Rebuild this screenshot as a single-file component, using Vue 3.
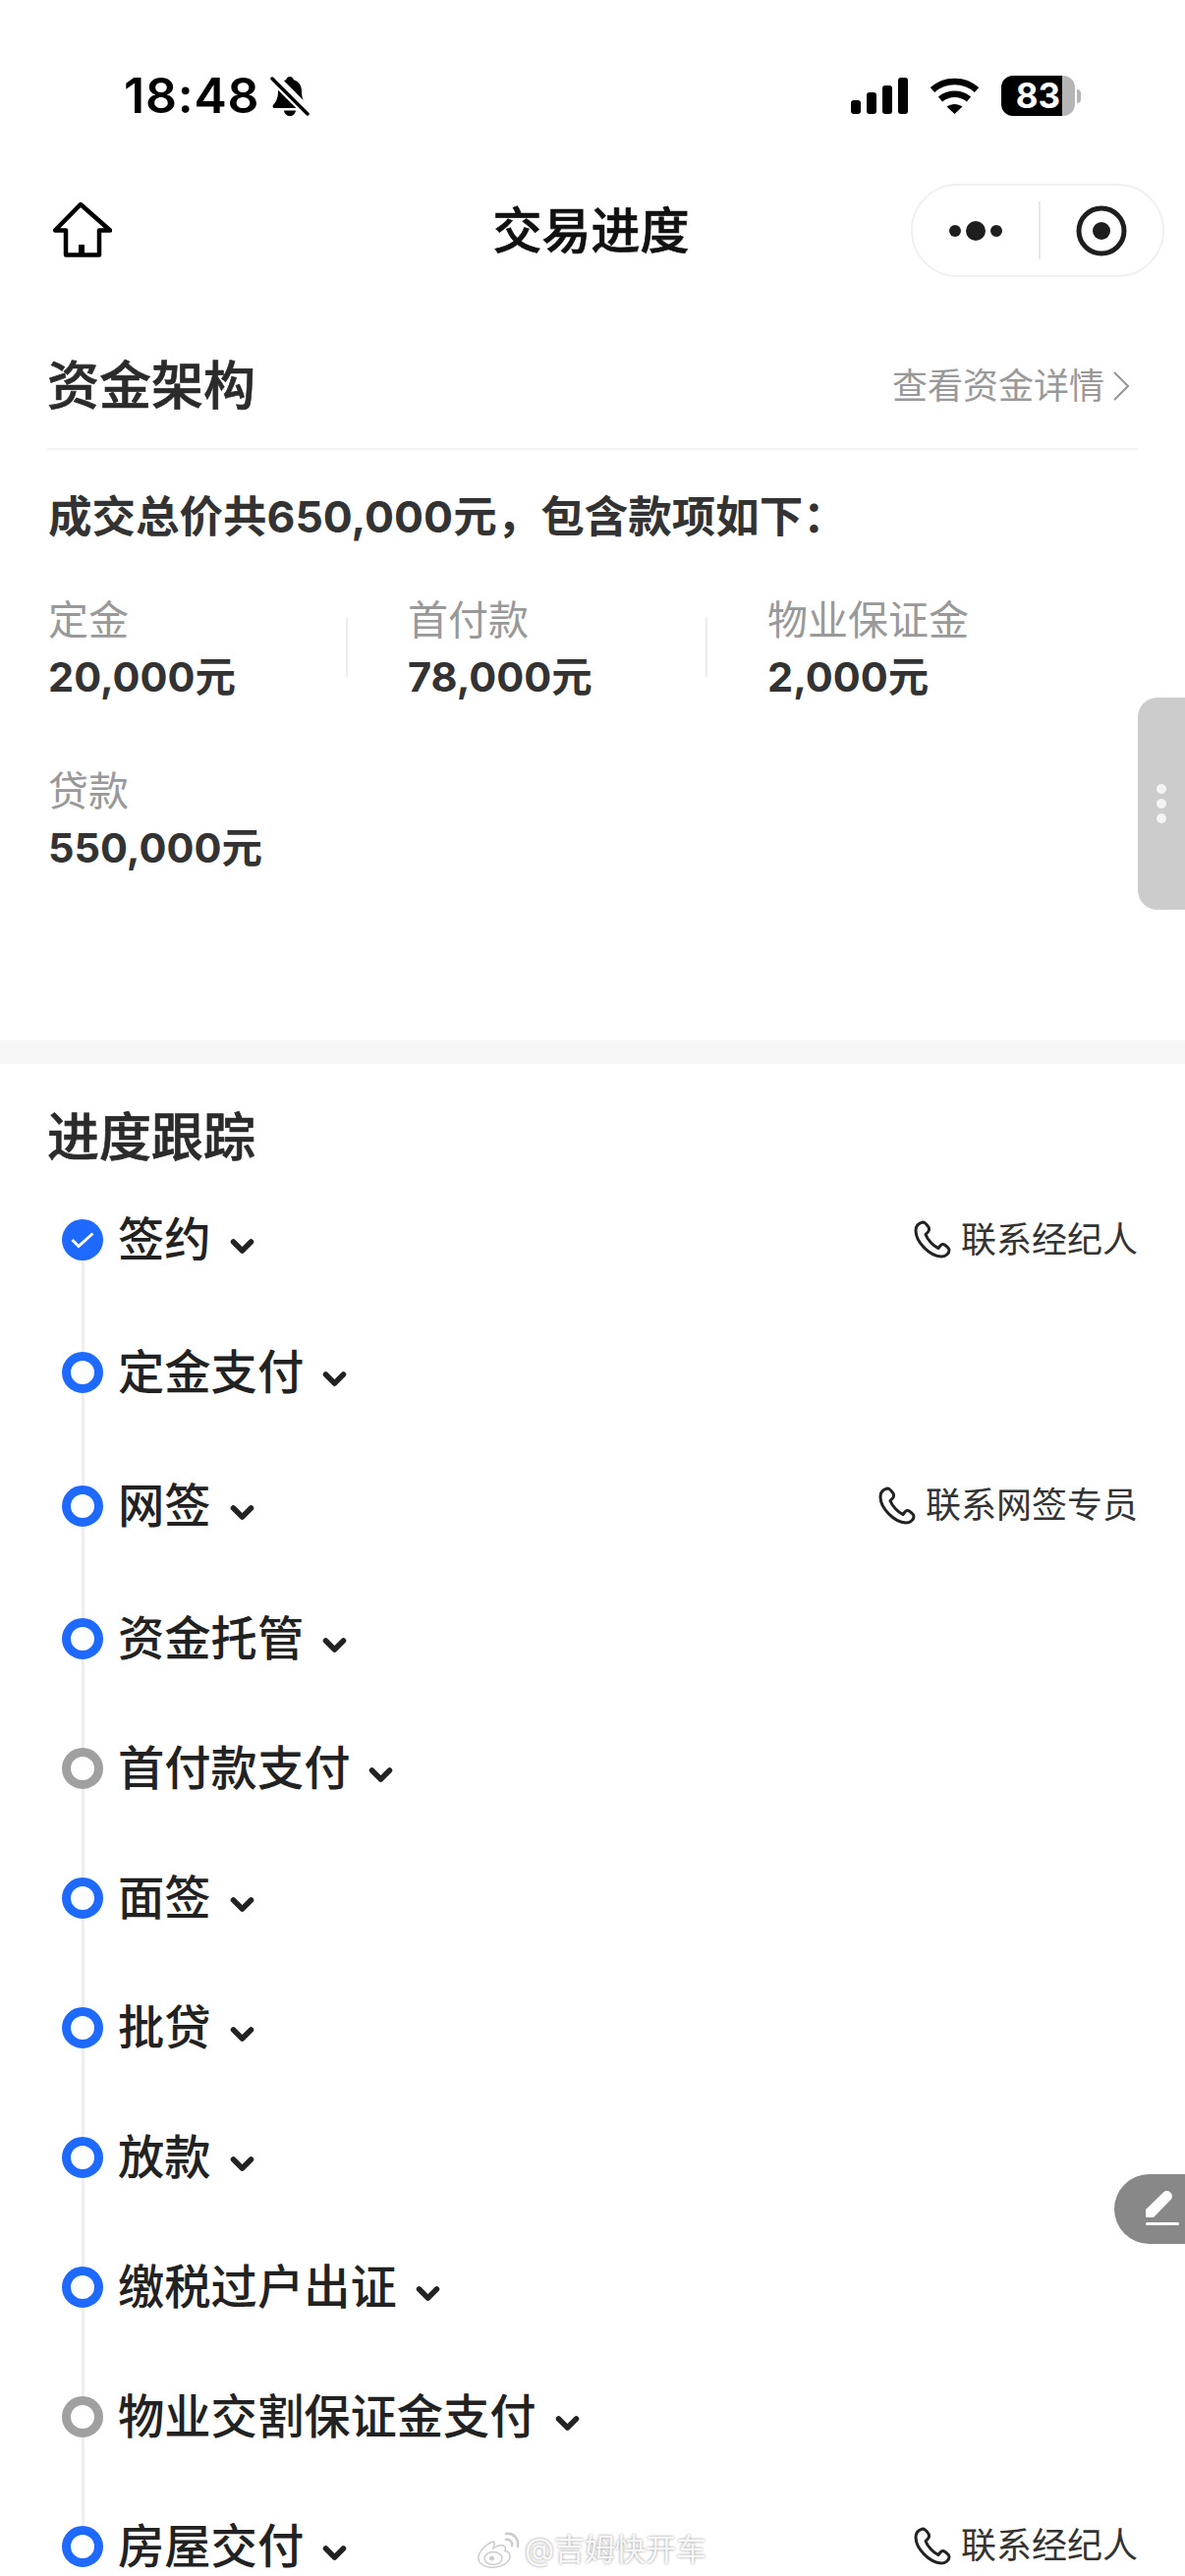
<script setup>
const items = [
  { label: '定金', value: '20,000元' },
  { label: '首付款', value: '78,000元' },
  { label: '物业保证金', value: '2,000元' },
  { label: '贷款', value: '550,000元' }
]

const steps = [
  { name: '签约', state: 'done', contact: '联系经纪人', tall: true },
  { name: '定金支付', state: 'active', tall: true },
  { name: '网签', state: 'active', contact: '联系网签专员', tall: true },
  { name: '资金托管', state: 'active' },
  { name: '首付款支付', state: 'idle' },
  { name: '面签', state: 'active' },
  { name: '批贷', state: 'active' },
  { name: '放款', state: 'active' },
  { name: '缴税过户出证', state: 'active' },
  { name: '物业交割保证金支付', state: 'idle' },
  { name: '房屋交付', state: 'active', contact: '联系经纪人' }
]
</script>

<template>
  <div class="page">
    <!-- 状态栏 -->
    <div class="status-bar">
      <div class="status-left">
        <span class="time">18:48</span>
        <svg class="bell" width="40" height="42" viewBox="0 0 40 42">
          <path d="M20 1c2 0 3.500 1.500 3.800 3.200C29.500 5.800 32 10.500 32 16c0 6 1.500 10 5 14 1 1.500.5 3-1.500 3H4.500c-2 0-2.500-1.500-1.500-3 3.500-4 5-8 5-14 0-5.500 2.500-10.200 8.200-11.800C16.500 2.500 18 1 20 1z" fill="#000" />
          <path d="M14 35.500h12c-.5 3.500-3 5.500-6 5.500s-5.500-2-6-5.500z" fill="#000" />
          <path d="M6 0l36 36" stroke="#fff" stroke-width="4" />
          <path d="M2 3l36 36" stroke="#fff" stroke-width="8" />
          <path d="M2 3l36 36" stroke="#000" stroke-width="3.500" stroke-linecap="round" />
        </svg>
      </div>
      <div class="status-right">
        <svg class="signal" width="58" height="37" viewBox="0 0 58 37">
          <rect x="0" y="23" width="10" height="14" rx="3" />
          <rect x="16" y="15" width="10" height="22" rx="3" />
          <rect x="32" y="8" width="10" height="29" rx="3" />
          <rect x="48" y="0" width="10" height="37" rx="3" />
        </svg>
        <svg class="wifi" width="51" height="37" viewBox="0 0 51 37">
          <path d="M3 12.500C15.500 1 35.500 1 48 12.500" fill="none" stroke="#000" stroke-width="6.500" />
          <path d="M11 22c8.500-7 20.500-7 29 0" fill="none" stroke="#000" stroke-width="6.500" />
          <path d="M17.500 29.500c5-3.500 11-3.500 16 0L25.500 37z" fill="#000" />
        </svg>
        <div class="battery">
          <div class="battery-body">
            <span class="battery-level">83</span>
            <span class="battery-rest"></span>
          </div>
          <span class="battery-nub"></span>
        </div>
      </div>
    </div>

    <!-- 导航栏 -->
    <div class="nav">
      <svg class="home" width="60" height="58" viewBox="0 0 60 58">
        <path d="M28 3L2 29.500h11V54.500h34V29.500h11z" fill="none" stroke="#000" stroke-width="4.500" stroke-linejoin="round" />
        <rect x="26" y="44" width="6" height="11" fill="#000" />
      </svg>
      <h1 class="nav-title">交易进度</h1>
      <div class="capsule">
        <div class="capsule-more">
          <i class="dot-sm"></i>
          <i class="dot-lg"></i>
          <i class="dot-sm"></i>
        </div>
        <span class="capsule-line"></span>
        <svg class="capsule-target" width="52" height="52" viewBox="0 0 52 52">
          <circle cx="26" cy="26" r="23" fill="none" stroke="#1e1e1e" stroke-width="5" />
          <circle cx="26" cy="26" r="9" fill="#1e1e1e" />
        </svg>
      </div>
    </div>

    <!-- 资金架构 -->
    <section class="funds">
      <div class="funds-head">
        <h2 class="section-title">资金架构</h2>
        <div class="funds-link">
          <span>查看资金详情</span>
          <svg width="20" height="32" viewBox="0 0 20 32">
            <path d="M3 2l14 14L3 30" fill="none" stroke="#999" stroke-width="2.200" />
          </svg>
        </div>
      </div>
      <p class="funds-total">成交总价共650,000元，包含款项如下：</p>
      <div class="funds-grid">
        <div v-for="(item, i) in items" :key="item.label" class="funds-cell">
          <div class="funds-item">
            <div class="funds-label">{{ item.label }}</div>
            <div class="funds-value">{{ item.value }}</div>
          </div>
          <span v-if="i < 2" class="funds-rule"></span>
        </div>
      </div>
    </section>

    <div class="band"></div>

    <!-- 进度跟踪 -->
    <section class="progress">
      <h2 class="section-title">进度跟踪</h2>
      <div class="steps">
        <div
          v-for="(step, i) in steps"
          :key="step.name"
          class="step"
          :class="{ tall: step.tall, last: i === steps.length - 1 }"
        >
          <div class="step-row">
            <span class="step-dot" :class="step.state">
              <svg v-if="step.state === 'done'" width="42" height="42" viewBox="0 0 42 42">
                <path d="M10.500 21l6.500 6.500L31.500 14.500" fill="none" stroke="#fff" stroke-width="3" />
              </svg>
            </span>
            <span class="step-name">{{ step.name }}</span>
            <svg class="step-arrow" width="25" height="17" viewBox="0 0 25 17">
              <path d="M3.500 4l9 9 9-9" fill="none" stroke="#222" stroke-width="5.500" stroke-linecap="round" stroke-linejoin="round" />
            </svg>
            <div v-if="step.contact" class="contact">
              <svg width="38" height="39" viewBox="0 0 38 39">
                <path d="M9 2C5 3 2 6 2 10.500C2 22 16 36.500 28 37C32 37 36 34 36 30.500C36 28.500 34 27 32 25.500C30 24 28 24 27 26L25 28.500C20 26.500 14 20 12 14.500L14 12.500C16 10.500 16 9 15 7C13 4 11 2 9 2Z" fill="none" stroke="#222" stroke-width="3" stroke-linejoin="round" />
              </svg>
              <span>{{ step.contact }}</span>
            </div>
          </div>
        </div>
      </div>
    </section>

    <!-- 悬浮元素 -->
    <div class="side-handle">
      <i></i>
      <i></i>
      <i></i>
    </div>
    <div class="edit-btn">
      <svg width="42" height="42" viewBox="0 0 42 42">
        <path d="M2 28v-8L20 2.500a5 5 0 0 1 7 0l.500.500a5 5 0 0 1 0 7L10 28z" fill="#fff" />
        <rect x="2" y="33" width="34" height="3" rx="1.500" fill="#fff" />
      </svg>
    </div>
    <div class="watermark">
      <svg width="46" height="40" viewBox="0 0 46 40">
        <path d="M17 12C8 15 1 24 2 30c1 6 9 9 17 8 9-1 15-6 15-11 0-3-2-5-5-5.500 1-3 0-5-2-5.500-3-.5-6 0-10 3 1-4 2-7 0-6.500z" fill="#fff" stroke="#ccc" stroke-width="1.500" />
        <ellipse cx="17" cy="29" rx="9" ry="6.500" fill="none" stroke="#ccc" stroke-width="1.500" />
        <circle cx="15.500" cy="29" r="2.500" fill="#ccc" />
        <path d="M30 4c7-1 13 4 12 13M30 10c3-1 7 2 6 6" fill="none" stroke="#ccc" stroke-width="2.500" stroke-linecap="round" />
      </svg>
      <span>@吉姆快开车</span>
    </div>
  </div>
</template>

<style>
html,
body {
  margin: 0;
  background: #fff;
}
</style>

<style scoped>
.page {
  position: relative;
  width: 1206px;
  height: 2622px;
  overflow: hidden;
  background: #fff;
  font-family: Inter, "Noto Sans CJK SC", sans-serif;
  color: #333;
}

h1,
h2,
p {
  margin: 0;
}

.status-bar {
  height: 187px;
  box-sizing: border-box;
  padding: 77px 106px 0 126px;
  display: flex;
  justify-content: space-between;
  align-items: flex-start;
}

.status-left {
  display: flex;
  align-items: center;
  height: 41px;
}

.time {
  font-size: 50px;
  line-height: 41px;
  font-weight: 600;
  color: #000;
  letter-spacing: 0.8px;
}

.bell {
  margin-left: 11px;
}

.status-right {
  display: flex;
  align-items: center;
  height: 41px;
}

.wifi {
  margin-left: 22px;
}

.battery {
  display: flex;
  align-items: center;
  margin-left: 22px;
}

.battery-body {
  display: flex;
  width: 75px;
  height: 41px;
  border-radius: 12px;
  overflow: hidden;
}

.battery-level {
  width: 62px;
  background: #000;
  color: #fff;
  font-size: 35px;
  font-weight: 700;
  line-height: 41px;
  text-align: right;
  padding-right: 2px;
  box-sizing: border-box;
}

.battery-rest {
  flex: 1;
  background: #b5b5b5;
}

.battery-nub {
  width: 4px;
  height: 14px;
  margin-left: 2px;
  background: #b5b5b5;
  border-radius: 0 4px 4px 0;
}

.nav {
  height: 95px;
  display: grid;
  grid-template-columns: 1fr auto 1fr;
  align-items: center;
  padding: 0 21px;
}

.home {
  margin-left: 33px;
  margin-top: -1px;
}

.nav-title {
  font-size: 50px;
  line-height: 64px;
  font-weight: 500;
  -webkit-text-stroke: 0.7px #111;
  color: #111;
  margin-top: 1px;
  margin-right: 3px;
}

.capsule {
  justify-self: end;
  width: 258px;
  height: 95px;
  box-sizing: border-box;
  border: 2px solid #f0f0f0;
  border-radius: 48px;
  display: flex;
  align-items: center;
}

.capsule-more {
  width: 128px;
  display: flex;
  align-items: center;
  justify-content: center;
  gap: 5px;
}

.dot-sm {
  width: 12px;
  height: 12px;
  border-radius: 50%;
  background: #1e1e1e;
}

.dot-lg {
  width: 20px;
  height: 20px;
  border-radius: 50%;
  background: #1e1e1e;
}

.capsule-line {
  width: 2px;
  height: 59px;
  background: #e8e8e8;
}

.capsule-target {
  margin-left: 36px;
}

.funds {
  padding: 79px 48px 167px;
}

.funds-head {
  display: flex;
  justify-content: space-between;
  align-items: center;
  height: 64px;
  padding-bottom: 31px;
  border-bottom: 2px solid #f2f2f2;
  box-sizing: content-box;
}

.section-title {
  font-size: 53px;
  line-height: 64px;
  font-weight: 500;
  -webkit-text-stroke: 0.7px #2b2b2b;
  color: #2b2b2b;
}

.funds-link {
  display: flex;
  align-items: center;
  gap: 7px;
  padding-right: 7px;
  font-size: 36px;
  line-height: 48px;
  color: #999;
}

.funds-total {
  margin-top: 38px;
  font-size: 44.5px;
  line-height: 60px;
  font-weight: 700;
  color: #333;
  padding-left: 1px;
}

.funds-grid {
  margin-top: 46px;
  display: grid;
  grid-template-columns: 366px 366px 366px;
  row-gap: 58px;
  padding-left: 1px;
}

.funds-cell {
  display: flex;
  align-items: flex-start;
}

.funds-item {
  width: 303px;
}

.funds-label {
  font-size: 41px;
  line-height: 58px;
  color: #999;
}

.funds-value {
  font-size: 41.5px;
  line-height: 58px;
  font-weight: 700;
  color: #333;
}

.funds-rule {
  width: 2px;
  height: 61px;
  margin-top: 26px;
  background: #eee;
}

.band {
  height: 24px;
  background: #f7f7f7;
}

.progress {
  padding: 43px 48px 0;
}

.steps {
  margin-top: 31px;
  padding-left: 15px;
}

.step {
  position: relative;
  height: 132px;
}

.step.tall {
  height: 135.33px;
}

/* 时间线 */
.step::before {
  content: "";
  position: absolute;
  left: 19.500px;
  top: 41px;
  bottom: -41px;
  width: 3px;
  background: #eee;
}

.step.last::before {
  display: none;
}

.step-row {
  position: relative;
  display: flex;
  align-items: center;
  height: 82px;
}

.step-dot {
  flex: none;
  width: 42px;
  height: 42px;
  box-sizing: border-box;
  border-radius: 50%;
  background: #fff;
  border: 9px solid #1e69ff;
  position: relative;
}

.step-dot.idle {
  border-color: #a0a0a0;
}

.step-dot.done {
  border: 0;
  background: #1e69ff;
}

.step-dot svg {
  display: block;
}

.step-name {
  margin-left: 15px;
  font-size: 47.3px;
  line-height: 64px;
  font-weight: 500;
  color: #222;
  margin-top: 0;
}

.step-arrow {
  margin-left: 19px;
  margin-top: 13px;
}

.contact {
  margin-left: auto;
  margin-bottom: 1px;
  display: flex;
  align-items: center;
  gap: 10px;
  font-size: 36px;
  line-height: 48px;
  color: #333;
}

.side-handle {
  position: absolute;
  top: 710px;
  right: 0;
  width: 48px;
  height: 216px;
  border-radius: 20px 0 0 20px;
  background: #ccc;
  display: flex;
  flex-direction: column;
  align-items: center;
  justify-content: center;
  gap: 5px;
}

.side-handle i {
  width: 10px;
  height: 10px;
  border-radius: 50%;
  background: #f4f4f4;
}

.edit-btn {
  position: absolute;
  top: 2213px;
  right: 0;
  width: 72px;
  height: 71px;
  box-sizing: border-box;
  padding: 16px 0 0 30px;
  border-radius: 36px 0 0 36px;
  background: #888;
}

.edit-btn svg {
  display: block;
}

.watermark {
  position: absolute;
  left: 485px;
  top: 2573px;
  display: flex;
  align-items: center;
  gap: 3px;
  font-size: 31px;
  line-height: 44px;
  color: rgba(255, 255, 255, 0.92);
  text-shadow: 0 0 3px rgba(0, 0, 0, 0.45);
}
</style>
